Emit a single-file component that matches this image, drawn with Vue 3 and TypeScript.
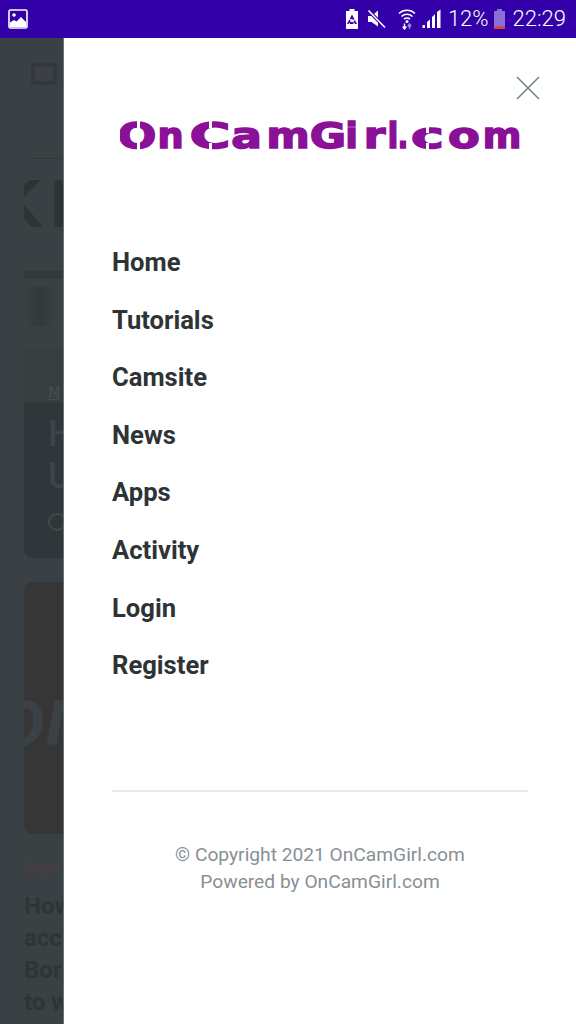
<template>
  <div class="screen">
    <div class="status-bar">
      <svg class="pic-icon" width="20" height="20" viewBox="0 0 20 20">
        <rect x="1" y="1" width="18" height="18" rx="1.500" fill="none" stroke="#fff" stroke-width="1.600" />
        <circle cx="6" cy="6" r="1.800" fill="#fff" />
        <path d="M2 18v-4.500L6 11l2.500 1.500L13 8l5 5v5z" fill="#fff" />
      </svg>
      <div class="status-right">
        <svg width="14" height="22" viewBox="0 0 14 22">
          <path d="M4.500 1h5v2H13v18H1V3h3.500z" fill="#fff" />
          <path d="M7 8.500 10.500 15H3.500z" fill="none" stroke="#3300aa" stroke-width="1.800" stroke-dasharray="3.500 1.200" />
        </svg>
        <svg class="mute" width="20" height="20" viewBox="0 0 20 20">
          <path d="M1 7h3.500L11 1.500v16L4.500 13H1z" fill="#fff" />
          <path d="M1.500 1.500 18 18.500" stroke="#3300aa" stroke-width="3.500" />
          <path d="M1.500 1.500 18 18.500" stroke="#fff" stroke-width="1.600" />
        </svg>
        <svg class="wifi" width="18" height="22" viewBox="0 0 18 22">
          <path d="M1 5.500a11.500 11.500 0 0 1 16 0M3.500 8.500a8 8 0 0 1 11 0M6 11.300a4.300 4.300 0 0 1 6 0" fill="none" stroke="#fff" stroke-width="1.600" />
          <circle cx="9" cy="13.500" r="1.500" fill="#fff" />
          <path d="M6.500 15.500v4M4.800 18.500l1.700 2.500 1.700-2.500" fill="none" stroke="#fff" stroke-width="1.400" />
          <path d="M11.500 21v-4M9.800 18.500l1.700-2.500 1.700 2.500" fill="none" stroke="#a48ad8" stroke-width="1.400" />
        </svg>
        <svg class="signal" width="19" height="20" viewBox="0 0 19 20">
          <rect x="0.500" y="16" width="2.500" height="3" fill="#fff" />
          <path d="M5 19v-6l3-2.500V19zM10 19V8l3-3v14zM15 19V3l3.500-2.500V19z" fill="#fff" />
        </svg>
        <span class="pct">12%</span>
        <svg width="11" height="20" viewBox="0 0 11 20">
          <path d="M3 0h5v2h3v18H0V2h3z" fill="#8b6fd4" />
          <rect x="0" y="17.500" width="11" height="2.500" fill="#e0432f" />
        </svg>
        <span class="clock">22:29</span>
      </div>
    </div>

    <div class="stage">
      <div class="backdrop">
        <div class="page">
          <div class="page-logo"></div>
          <div class="page-rule"></div>
          <div class="page-hero"><span>KI</span></div>
          <div class="page-strip"></div>
          <div class="page-thumb"></div>
          <div class="card-one">
            <span class="card-tag">N</span>
            <span class="card-title">H<br />U</span>
            <span class="card-time"></span>
          </div>
          <div class="card-two">
            <span class="card-mark">on</span>
          </div>
          <div class="page-link">New</div>
          <div class="page-heading">
            How<br />acc<br />Bor<br />to w
          </div>
        </div>
      </div>

      <aside class="drawer">
        <div class="drawer-top">
          <svg width="24" height="24" viewBox="0 0 24 24">
            <path d="M1 1l22 22M23 1 1 23" stroke="#6f8080" stroke-width="1.500" fill="none" />
          </svg>
        </div>
        <div class="logo">
          <svg width="400" height="36" viewBox="120 118 400 36">
            <text
              v-for="(g, i) in logoGlyphs"
              :key="i"
              :transform="glyphTransform(g)"
              class="logo-text"
            >{{ g.ch }}</text>
            <rect
              v-for="(n, i) in logoNotches"
              :key="'n' + i"
              :x="n[0]"
              :y="n[1]"
              :width="n[2]"
              :height="n[3]"
              fill="#fff"
            />
          </svg>
        </div>
        <nav class="menu">
          <a v-for="item in menuItems" :key="item" class="menu-item">{{ item }}</a>
        </nav>
        <div class="divider"></div>
        <div class="copyright">
          <div>© Copyright 2021 OnCamGirl.com</div>
          <div>Powered by OnCamGirl.com</div>
        </div>
      </aside>
    </div>
  </div>
</template>

<script setup lang="ts">
interface LogoGlyph {
  ch: string
  x: number
  w: number
  adv: number // advance of the letter in DejaVu Sans Bold, in em
}

const LOGO_SIZE = 35
const LOGO_BASELINE = 147.5

const menuItems: string[] = [
  'Home',
  'Tutorials',
  'Camsite',
  'News',
  'Apps',
  'Activity',
  'Login',
  'Register',
]

// the logo font is much wider than anything installed, so each letter is stretched to its box
const logoGlyphs: LogoGlyph[] = [
  { ch: 'O', x: 120, w: 34, adv: 0.85 },
  { ch: 'n', x: 159, w: 23, adv: 0.712 },
  { ch: 'C', x: 192, w: 36, adv: 0.734 },
  { ch: 'a', x: 233, w: 27, adv: 0.675 },
  { ch: 'm', x: 269, w: 38, adv: 1.042 },
  { ch: 'G', x: 312, w: 32, adv: 0.821 },
  { ch: 'i', x: 348, w: 7, adv: 0.343 },
  { ch: 'r', x: 365, w: 19, adv: 0.493 },
  { ch: 'l', x: 390, w: 6, adv: 0.343 },
  { ch: '.', x: 400, w: 6, adv: 0.38 },
  { ch: 'c', x: 413, w: 29, adv: 0.593 },
  { ch: 'o', x: 450, w: 28, adv: 0.687 },
  { ch: 'm', x: 485, w: 34, adv: 1.042 },
]

// the small breaks in the logo's strokes
const logoNotches: number[][] = [
  [137, 120, 3, 30],
  [209, 120, 3, 8],
  [209, 143, 3, 8],
  [426, 126, 3, 7],
  [426, 143, 3, 7],
]

function glyphTransform(g: LogoGlyph): string {
  const natural = g.adv * LOGO_SIZE
  // ink is narrower than the advance, roughly 12% for these letters
  const ink = g.w < 10 ? natural * 0.55 : natural * 0.88
  const sx = g.w / ink
  const left = g.x - ((natural - ink) / 2) * sx
  return `translate(${left} ${LOGO_BASELINE}) scale(${sx} 1)`
}
</script>

<style>
html,
body {
  margin: 0;
  background: #3a4144;
}
</style>

<style scoped>
.screen {
  width: 576px;
  height: 1024px;
  display: flex;
  flex-direction: column;
  overflow: hidden;
  font-family: Roboto, "Liberation Sans", sans-serif;
}

.status-bar {
  height: 38px;
  flex: none;
  background: #3300aa;
  color: #fff;
  display: flex;
  align-items: center;
  justify-content: space-between;
  padding: 0 10px 0 8px;
}

.status-right {
  display: flex;
  align-items: center;
  gap: 8px;
}

.mute {
  margin-right: 3px;
}

.signal {
  margin-left: -2px;
}

.pct {
  margin: 0 -3px 0 -1px;
}

.pct,
.clock {
  font-size: 22px;
  font-weight: 300;
  line-height: 38px;
}

.stage {
  flex: 1;
  display: flex;
  min-height: 0;
}

.backdrop {
  width: 64px;
  flex: none;
  overflow: hidden;
  background: #3a4144;
}

.page {
  width: 576px;
  padding-left: 24px;
  box-sizing: border-box;
  display: flex;
  flex-direction: column;
}

.page-logo {
  margin: 25px 0 0 7px;
  width: 18px;
  height: 14px;
  border: 4px solid #35363f;
  border-radius: 3px;
}

.page-rule {
  margin: 73px 0 0 6px;
  height: 1px;
  background: #32383a;
}

.page-hero {
  margin-top: 19px;
  height: 50px;
  overflow: hidden;
}

.page-hero span {
  display: block;
  margin-left: -30px;
  font: bold 68px/50px "Liberation Sans", sans-serif;
  letter-spacing: 7px;
  color: #2e3436;
}

.page-strip {
  margin-top: 43px;
  height: 8px;
  background: #34393b;
}

.page-thumb {
  margin-top: 7px;
  height: 40px;
  width: 32px;
  background: linear-gradient(90deg, #3a4144, #34393a 50%, #3a4144);
}

.card-one {
  margin-top: 23px;
  height: 209px;
  border-radius: 8px;
  background: linear-gradient(#373e40 26%, #30373a 26%);
  position: relative;
  overflow: hidden;
}

.card-tag {
  position: absolute;
  left: 24px;
  top: 33px;
  font: 500 17px/20px Roboto, sans-serif;
  color: #454b4d;
  text-decoration: underline;
}

.card-title {
  position: absolute;
  left: 24px;
  top: 64px;
  font: 500 36px/42px Roboto, sans-serif;
  color: #3e4548;
}

.card-time {
  position: absolute;
  left: 24px;
  top: 164px;
  width: 14px;
  height: 14px;
  border: 2px solid #42494b;
  border-radius: 50%;
}

.card-two {
  margin-top: 24px;
  height: 252px;
  border-radius: 8px;
  background: #373637;
  overflow: hidden;
}

.card-mark {
  display: block;
  margin: 85px 0 0 -24px;
  font: italic 500 84px/100px Roboto, sans-serif;
  color: #3a4245;
}

.page-link {
  margin-top: 22px;
  font: 18px/22px Roboto, sans-serif;
  color: #4a3c42;
  text-decoration: underline;
}

.page-heading {
  margin-top: 12px;
  font: 700 24px/32px Roboto, sans-serif;
  color: #2f3437;
  white-space: nowrap;
}

.drawer {
  flex: 1;
  position: relative;
  z-index: 1;
  background: #fff;
  box-shadow: -1px 0 0 #6a7174;
  display: flex;
  flex-direction: column;
  padding: 0 48px;
}

.drawer-top {
  height: 62px;
  display: flex;
  justify-content: flex-end;
  align-items: flex-end;
  margin-right: -12px;
}

.drawer-top svg {
  display: block;
}

.logo {
  margin: 18px 0 0 8px;
  height: 36px;
}

.logo-text {
  font: bold 35px "DejaVu Sans", sans-serif;
  fill: #8a1097;
  stroke: #8a1097;
  stroke-width: 1.500px;
}

.menu {
  margin-top: 80px;
  display: flex;
  flex-direction: column;
}

.menu-item {
  font-size: 25.600px;
  font-weight: 700;
  line-height: 57.600px;
  color: #2e3436;
}

.divider {
  margin-top: 95px;
  height: 2px;
  background: #e6e8e9;
}

.copyright {
  margin-top: 49px;
  text-align: center;
  font-size: 19.200px;
  line-height: 27px;
  color: #879095;
}
</style>
